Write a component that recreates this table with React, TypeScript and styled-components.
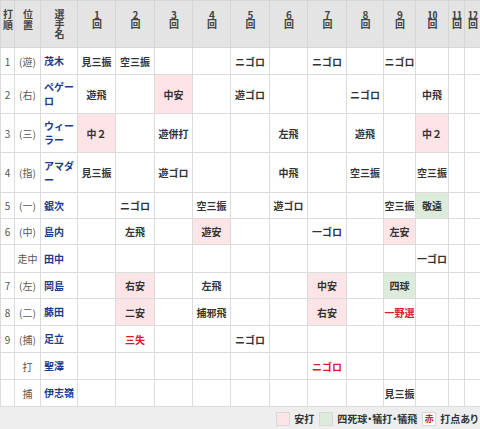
import React from 'react';
import styled, { createGlobalStyle } from 'styled-components';

const GlobalStyle = createGlobalStyle`
  html, body {
    margin: 0;
    padding: 0;
    background: #fff;
  }
  body {
    font-family: "Noto Sans CJK JP", "Noto Sans", sans-serif;
    font-size: 10px;
    color: #333;
  }
`;

type Kind = 'hit' | 'walk' | undefined;

interface AtBat {
  t: string;
  k?: Kind;
  rbi?: boolean;
}

interface Batter {
  order: string;
  pos: string;
  name: string;
  h: number;
  res: Record<number, AtBat>;
}

const WIDTHS = [14, 26, 37, 38, 39, 38, 38, 39, 38, 39, 37, 32, 33, 16, 16];

const batters: Batter[] = [
  {
    order: '1', pos: '(遊)', name: '茂木', h: 27,
    res: { 1: { t: '見三振' }, 2: { t: '空三振' }, 5: { t: 'ニゴロ' }, 7: { t: 'ニゴロ' }, 9: { t: 'ニゴロ' } },
  },
  {
    order: '2', pos: '(右)', name: 'ペゲーロ', h: 39,
    res: { 1: { t: '遊飛' }, 3: { t: '中安', k: 'hit' }, 5: { t: '遊ゴロ' }, 8: { t: 'ニゴロ' }, 10: { t: '中飛' } },
  },
  {
    order: '3', pos: '(三)', name: 'ウィーラー', h: 39,
    res: { 1: { t: '中２', k: 'hit' }, 3: { t: '遊併打' }, 6: { t: '左飛' }, 8: { t: '遊飛' }, 10: { t: '中２', k: 'hit' } },
  },
  {
    order: '4', pos: '(指)', name: 'アマダー', h: 40,
    res: { 1: { t: '見三振' }, 3: { t: '遊ゴロ' }, 6: { t: '中飛' }, 8: { t: '空三振' }, 10: { t: '空三振' } },
  },
  {
    order: '5', pos: '(一)', name: '銀次', h: 26,
    res: { 2: { t: 'ニゴロ' }, 4: { t: '空三振' }, 6: { t: '遊ゴロ' }, 9: { t: '空三振' }, 10: { t: '敬遠', k: 'walk' } },
  },
  {
    order: '6', pos: '(中)', name: '島内', h: 26,
    res: { 2: { t: '左飛' }, 4: { t: '遊安', k: 'hit' }, 7: { t: '一ゴロ' }, 9: { t: '左安', k: 'hit' } },
  },
  {
    order: '', pos: '走中', name: '田中', h: 28,
    res: { 10: { t: '一ゴロ' } },
  },
  {
    order: '7', pos: '(左)', name: '岡島', h: 26,
    res: { 2: { t: '右安', k: 'hit' }, 4: { t: '左飛' }, 7: { t: '中安', k: 'hit' }, 9: { t: '四球', k: 'walk' } },
  },
  {
    order: '8', pos: '(二)', name: '藤田', h: 27,
    res: { 2: { t: '二安', k: 'hit' }, 4: { t: '捕邪飛' }, 7: { t: '右安', k: 'hit' }, 9: { t: '一野選', rbi: true } },
  },
  {
    order: '9', pos: '(捕)', name: '足立', h: 27,
    res: { 2: { t: '三失', rbi: true }, 5: { t: 'ニゴロ' } },
  },
  {
    order: '', pos: '打', name: '聖澤', h: 27,
    res: { 7: { t: 'ニゴロ', rbi: true } },
  },
  {
    order: '', pos: '捕', name: '伊志嶺', h: 27,
    res: { 9: { t: '見三振' } },
  },
];

const Wrap = styled.div`
  width: 480px;
`;

const Table = styled.table`
  width: 480px;
  table-layout: fixed;
  border-collapse: collapse;
`;

const Th = styled.th`
  background: #e4e4e4;
  border: 1px solid #d6d6d6;
  color: #444;
  font-weight: bold;
  font-size: 10px;
  vertical-align: top;
  text-align: center;
  padding: 8px 0 0;
  height: 47px;
  box-sizing: border-box;
`;

/* header labels are set vertically, one glyph under the other */
const VLabel = styled.span<{ $ls: number }>`
  display: inline-block;
  writing-mode: vertical-rl;
  text-orientation: upright;
  letter-spacing: ${(p) => p.$ls}px;
  line-height: 12px;
`;

const Num = styled.span`
  text-combine-upright: all;
`;

const Row = styled.tr<{ $h: number }>`
  height: ${(p) => p.$h}px;
`;

const Td = styled.td`
  border: 1px solid #dcdcdc;
  padding: 0;
  font-size: 10px;
  vertical-align: middle;
`;

const NumCell = styled(Td)`
  text-align: center;
  color: #555;
`;

const PosCell = styled(Td)`
  text-align: center;
  color: #555;
`;

const NameCell = styled(Td)`
  text-align: left;
  padding: 0 1px 0 3px;
  color: #1e3c8c;
  font-weight: bold;
  line-height: 14px;
`;

const ResultCell = styled(Td)<{ $kind?: Kind; $rbi?: boolean }>`
  text-align: center;
  font-weight: bold;
  white-space: nowrap;
  color: ${(p) => (p.$rbi ? '#d0202a' : '#333')};
  background: ${(p) =>
    p.$kind === 'hit' ? '#fde4e6' : p.$kind === 'walk' ? '#dcebdc' : '#fff'};
`;

const Legend = styled.div`
  background: #eeeeee;
  height: 23px;
  display: flex;
  justify-content: flex-end;
  align-items: center;
  padding-right: 2px;
  font-size: 10px;
  font-weight: bold;
  color: #333;
  font-feature-settings: "palt";
`;

const LegendItem = styled.div`
  display: flex;
  align-items: center;
  gap: 4px;
  margin-left: 5px;
`;

const Swatch = styled.span<{ $bg: string }>`
  display: inline-flex;
  align-items: center;
  justify-content: center;
  width: 14px;
  height: 14px;
  box-sizing: border-box;
  border: 1px solid #d8d8d8;
  background: ${(p) => p.$bg};
  color: #d0202a;
  font-size: 9px;
  font-weight: bold;
`;

const innings = Array.from({ length: 12 }, (_, i) => i + 1);

function App(): JSX.Element {
  return (
    <Wrap>
      <GlobalStyle />
      <Table>
        <colgroup>
          {WIDTHS.map((w, i) => (
            <col key={i} style={{ width: w }} />
          ))}
        </colgroup>
        <thead>
          <tr>
            <Th>
              <VLabel $ls={1}>打順</VLabel>
            </Th>
            <Th>
              <VLabel $ls={1}>位置</VLabel>
            </Th>
            <Th>
              <VLabel $ls={0}>選手名</VLabel>
            </Th>
            {innings.map((n) => (
              <Th key={n}>
                <VLabel $ls={1}>
                  <Num>{n}</Num>回
                </VLabel>
              </Th>
            ))}
          </tr>
        </thead>
        <tbody>
          {batters.map((b, i) => (
            <Row key={i} $h={b.h}>
              <NumCell>{b.order}</NumCell>
              <PosCell>{b.pos}</PosCell>
              <NameCell>{b.name}</NameCell>
              {innings.map((n) => {
                const r = b.res[n];
                return (
                  <ResultCell key={n} $kind={r?.k} $rbi={r?.rbi}>
                    {r?.t ?? ''}
                  </ResultCell>
                );
              })}
            </Row>
          ))}
        </tbody>
      </Table>
      <Legend>
        <LegendItem>
          <Swatch $bg="#fde4e6" />
          <span>安打</span>
        </LegendItem>
        <LegendItem>
          <Swatch $bg="#dcebdc" />
          <span>四死球・犠打・犠飛</span>
        </LegendItem>
        <LegendItem>
          <Swatch $bg="#fff">赤</Swatch>
          <span>打点あり</span>
        </LegendItem>
      </Legend>
    </Wrap>
  );
}

export default App;
